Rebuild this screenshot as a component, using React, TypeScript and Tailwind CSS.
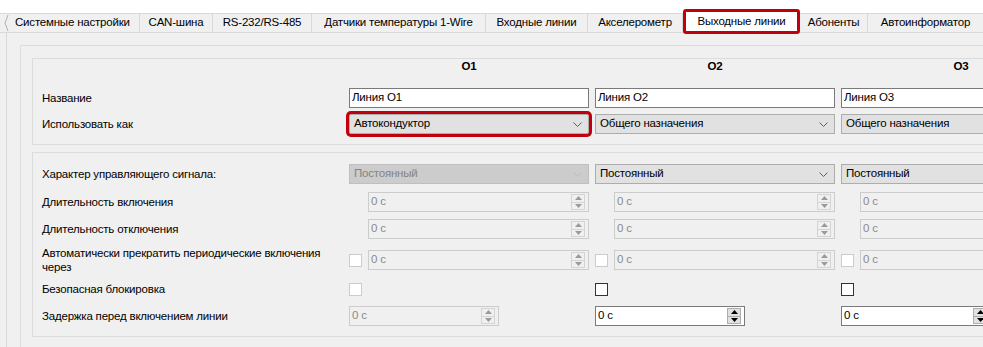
import React from "react";

const tabs: { label: string; w: number; selected?: boolean; first?: boolean }[] = [
  { label: "Системные настройки", w: 140, first: true },
  { label: "CAN-шина", w: 73 },
  { label: "RS-232/RS-485", w: 99 },
  { label: "Датчики температуры 1-Wire", w: 174 },
  { label: "Входные линии", w: 102 },
  { label: "Акселерометр", w: 95 },
  { label: "Выходные линии", w: 117, selected: true },
  { label: "Абоненты", w: 68 },
  { label: "Автоинформатор", w: 116 },
];

function Chevron({ disabled }: { disabled?: boolean }) {
  return (
    <svg width="9" height="5" viewBox="0 0 9 5" className="shrink-0">
      <polyline
        points="0.5,0.5 4.5,4.5 8.5,0.5"
        fill="none"
        stroke={disabled ? "#bdbdbd" : "#606060"}
        strokeWidth="1"
      />
    </svg>
  );
}

function Combo({ text, disabled, highlight }: { text: string; disabled?: boolean; highlight?: boolean }) {
  return (
    <div
      className={
        "h-[20px] w-[240px] border flex items-center justify-between pl-[4px] pr-[6px] " +
        (disabled
          ? "bg-[#cccccc] border-[#bfbfbf] text-[#838383]"
          : "bg-[#e1e1e1] border-[#adadad] text-black") +
        (highlight ? " ring-[3px] ring-[#c0000c] rounded-[2px]" : "")
      }
    >
      <span className="leading-none whitespace-nowrap">{text}</span>
      <Chevron disabled={disabled} />
    </div>
  );
}

function Arrow({ up, color }: { up?: boolean; color: string }) {
  return (
    <svg width="7" height="4" viewBox="0 0 7 4">
      <polygon points={up ? "0,4 3.5,0 7,4" : "0,0 3.5,4 7,0"} fill={color} />
    </svg>
  );
}

function Spin({ disabled, width }: { disabled?: boolean; width: number }) {
  return (
    <div
      className={
        "h-[20px] border flex items-center justify-between pl-[2px] pr-[3px] " +
        (disabled ? "border-[#cccccc] bg-[#f0f0f0] text-[#8a8a8a]" : "border-[#7a7a7a] bg-white text-black")
      }
      style={{ width }}
    >
      <span className="leading-none">0 с</span>
      <div
        className={
          "w-[14px] h-[16px] border flex flex-col " +
          (disabled ? "border-[#d4d4d4] bg-[#f0f0f0]" : "border-[#adadad] bg-[#e1e1e1]")
        }
      >
        <div className={"flex-1 flex items-center justify-center border-b " + (disabled ? "border-[#d4d4d4]" : "border-[#adadad]")}>
          <Arrow up color={disabled ? "#9a9a9a" : "#000"} />
        </div>
        <div className="flex-1 flex items-center justify-center">
          <Arrow color={disabled ? "#9a9a9a" : "#000"} />
        </div>
      </div>
    </div>
  );
}

function Check({ disabled }: { disabled?: boolean }) {
  return (
    <div
      className={
        "w-[13px] h-[13px] border shrink-0 " +
        (disabled ? "border-[#cccccc] bg-white" : "border-[#333333] bg-white")
      }
    />
  );
}

function Row({
  label,
  h,
  mt,
  children,
}: {
  label: React.ReactNode;
  h: number;
  mt?: number;
  children: React.ReactNode[];
}) {
  return (
    <div className="flex items-center" style={{ height: h, marginTop: mt ?? 0 }}>
      <div className="w-[307px] shrink-0 leading-[14px] whitespace-nowrap">{label}</div>
      <div className="flex gap-[6px] items-center">
        {children.map((c, i) => (
          <div key={i} className="w-[240px] flex items-center">
            {c}
          </div>
        ))}
      </div>
    </div>
  );
}

export default function App() {
  return (
    <div className="w-[983px] h-[347px] overflow-hidden bg-white text-[11.5px] tracking-[-0.2px] text-black font-['Liberation_Sans',Arial,sans-serif] flex flex-col">
      {/* Tab strip */}
      <div className="h-[32px] shrink-0 pt-[13px] bg-white">
        <div className="flex items-start h-[19px]">
          {tabs.map((t) =>
            t.selected ? (
              <div
                key={t.label}
                className="relative z-10 -mt-[4px] h-[25px] shrink-0 bg-white border-[3px] border-[#c0000c] rounded-[3px] flex items-center justify-center whitespace-nowrap"
                style={{ width: t.w }}
              >
                {t.label}
              </div>
            ) : (
              <div
                key={t.label}
                className={
                  "h-[19px] shrink-0 bg-[#f0f0f0] border-t border-r border-[#d9d9d9] flex items-center whitespace-nowrap " +
                  (t.first ? "justify-start" : "justify-center")
                }
                style={{ width: t.w }}
              >
                {t.first && (
                  <svg width="14" height="18" viewBox="0 0 14 18" className="shrink-0">
                    <polyline points="8,1 5,9 8,17" fill="none" stroke="#b0b0b0" strokeWidth="1" />
                  </svg>
                )}
                <span className={t.first ? "pl-[1px]" : ""}>{t.label}</span>
              </div>
            )
          )}
        </div>
      </div>

      {/* Pane */}
      <div className="flex-1 bg-[#f0f0f0] border-t border-[#d9d9d9] pl-[6px]">
        <div className="h-full border-l border-[#d9d9d9] pl-[13px] pt-[12px]">
          <div className="h-full border-l border-t border-[#dcdcdc] pl-[11px] pt-[12px]">
            {/* Group 1 */}
            <div className="w-[1200px] border border-[#dcdcdc] pl-[9px] pb-[10px]">
              <div className="flex h-[15px] mt-0">
                <div className="w-[307px] shrink-0" />
                <div className="flex gap-[6px]">
                  {["O1", "O2", "O3"].map((o) => (
                    <div key={o} className="w-[240px] text-center font-bold leading-[15px]">
                      {o}
                    </div>
                  ))}
                </div>
              </div>
              <Row label="Название" h={20} mt={14}>
                {["Линия O1", "Линия O2", "Линия O3"].map((n) => (
                  <div key={n} className="h-[20px] w-[240px] border border-[#7a7a7a] bg-white flex items-center pl-[2px]">
                    <span className="leading-none">{n}</span>
                  </div>
                ))}
              </Row>
              <Row label="Использовать как" h={20} mt={6}>
                {[
                  <Combo key="a" text="Автокондуктор" highlight />,
                  <Combo key="b" text="Общего назначения" />,
                  <Combo key="c" text="Общего назначения" />,
                ]}
              </Row>
            </div>

            {/* Group 2 */}
            <div className="w-[1200px] mt-[7px] border border-[#dcdcdc] pl-[9px] pt-[11px] pb-[10px]">
              <Row label="Характер управляющего сигнала:" h={20}>
                {[
                  <Combo key="a" text="Постоянный" disabled />,
                  <Combo key="b" text="Постоянный" />,
                  <Combo key="c" text="Постоянный" />,
                ]}
              </Row>
              <Row label="Длительность включения" h={20} mt={8}>
                {[0, 1, 2].map((i) => (
                  <div key={i} className="pl-[19px]">
                    <Spin disabled width={221} />
                  </div>
                ))}
              </Row>
              <Row label="Длительность отключения" h={20} mt={7}>
                {[0, 1, 2].map((i) => (
                  <div key={i} className="pl-[19px]">
                    <Spin disabled width={221} />
                  </div>
                ))}
              </Row>
              <Row
                label={
                  <>
                    Автоматически прекратить периодические включения
                    <br />
                    через
                  </>
                }
                h={28}
                mt={7}
              >
                {[0, 1, 2].map((i) => (
                  <div key={i} className="flex items-center gap-[6px]">
                    <Check disabled />
                    <Spin disabled width={221} />
                  </div>
                ))}
              </Row>
              <Row label="Безопасная блокировка" h={14} mt={8}>
                {[<Check key="a" disabled />, <Check key="b" />, <Check key="c" />]}
              </Row>
              <Row label="Задержка перед включением линии" h={20} mt={10}>
                {[
                  <Spin key="a" disabled width={150} />,
                  <Spin key="b" width={150} />,
                  <Spin key="c" width={150} />,
                ]}
              </Row>
            </div>
          </div>
        </div>
      </div>
    </div>
  );
}
